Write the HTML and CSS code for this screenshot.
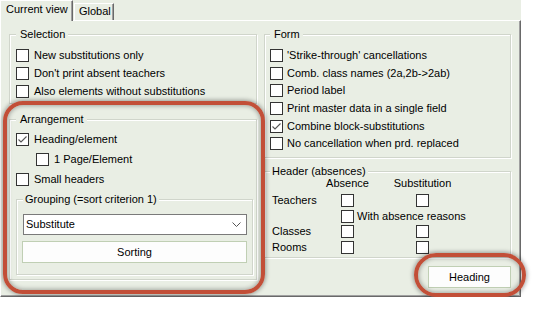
FILE: index.html
```html
<!DOCTYPE html>
<html>
<head>
<meta charset="utf-8">
<link rel="stylesheet" href="styles.css">
</head>
<body>
<div class="dialog">
  <div class="tabs">
    <div class="tab active">Current view</div>
    <div class="tab">Global</div>
  </div>
  <div class="panel">
    <div class="col col-left">
      <fieldset class="grp sel">
        <legend>Selection</legend>
        <div class="chk"><span class="box"></span>New substitutions only</div>
        <div class="chk"><span class="box"></span>Don't print absent teachers</div>
        <div class="chk"><span class="box"></span>Also elements without substitutions</div>
      </fieldset>
      <fieldset class="grp arr">
        <legend>Arrangement</legend>
        <div class="chk tall"><span class="box"><svg viewBox="0 0 11 11" class="tick"><polyline points="1.5,5.5 4,8 9.5,2.5"/></svg></span>Heading/element</div>
        <div class="chk tall indent"><span class="box"></span>1 Page/Element</div>
        <div class="chk tall"><span class="box"></span>Small headers</div>
        <fieldset class="grp grpg">
          <legend>Grouping (=sort criterion 1)</legend>
          <div class="combo"><span>Substitute</span><svg class="chev" viewBox="0 0 9 5"><polyline points="0.5,0.5 4.5,4.5 8.5,0.5"/></svg></div>
          <div class="btn sort">Sorting</div>
        </fieldset>
      </fieldset>
    </div>
    <div class="col col-right">
      <fieldset class="grp form">
        <legend>Form</legend>
        <div class="chk f"><span class="box"></span>'Strike-through' cancellations</div>
        <div class="chk f"><span class="box"></span>Comb. class names (2a,2b-&gt;2ab)</div>
        <div class="chk f"><span class="box"></span>Period label</div>
        <div class="chk f"><span class="box"></span>Print master data in a single field</div>
        <div class="chk f"><span class="box"><svg viewBox="0 0 11 11" class="tick"><polyline points="1.5,5.5 4,8 9.5,2.5"/></svg></span>Combine block-substitutions</div>
        <div class="chk f"><span class="box"></span>No cancellation when prd. replaced</div>
      </fieldset>
      <fieldset class="grp hdr">
        <legend>Header (absences)</legend>
        <div class="hgrid">
          <div class="colhead r1 c2">Absence</div>
          <div class="colhead r1 c4">Substitution</div>
          <div class="lbl r2">Teachers</div>
          <div class="cell r2 c2"><span class="box"></span></div>
          <div class="cell r2 c4"><span class="box"></span></div>
          <div class="cell r3 reasons"><span class="box"></span>With absence reasons</div>
          <div class="lbl r4">Classes</div>
          <div class="cell r4 c2"><span class="box"></span></div>
          <div class="cell r4 c4"><span class="box"></span></div>
          <div class="lbl r5">Rooms</div>
          <div class="cell r5 c2"><span class="box"></span></div>
          <div class="cell r5 c4"><span class="box"></span></div>
        </div>
      </fieldset>
      <div class="btn heading">Heading</div>
    </div>
  </div>
  <div class="hl hl-arr"></div>
  <div class="hl hl-head"></div>
</div>
</body>
</html>
```

FILE: styles.css
```css
* { box-sizing: border-box; }
html, body { margin: 0; background: #fff; }
body {
  font-family: "Liberation Sans", Arial, sans-serif;
  font-size: 11px;
  line-height: 13px;
  color: #000;
}
.dialog {
  position: relative;
  width: 521px;
  height: 297px;
  background: #e9eee4;
}
.tabs {
  display: flex;
  align-items: flex-end;
  height: 20px;
  position: relative;
  z-index: 1;
}
.tab {
  height: 17px;
  width: 40px;
  margin-left: 1px;
  padding: 1px 0 0 4px;
  border-left: 1px solid #fff;
  border-top: 1px solid #fff;
  border-right: 1px solid #696969;
  box-shadow: inset -1px 0 0 #a0a0a0;
  white-space: nowrap;
}
.tab.active {
  width: 73px;
  height: 21px;
  margin-left: 0;
  margin-bottom: -1px;
  padding: 2px 0 0 5px;
  background: #e9eee4;
}
.panel {
  height: 277px;
  border-top: 1px solid #fff;
  border-left: 1px solid #fff;
  border-right: 1px solid #696969;
  border-bottom: 1px solid #696969;
  box-shadow: inset -1px -1px 0 #a0a0a0;
  display: flex;
  gap: 7px;
  padding: 7px 0 0 8px;
}
.col { display: flex; flex-direction: column; }
.col-left { width: 248px; }
.col-right { width: 247px; }
.grp {
  margin: 0;
  min-width: 0;
  border: 1px solid #d0d5cb;
  box-shadow: inset 1px 1px 0 #fff, 1px 1px 0 #fff;
}
legend {
  padding: 0 3px 0 4px;
  line-height: 13px;
  background: #e9eee4;
  white-space: nowrap;
}
.chk {
  display: flex;
  align-items: center;
  height: 17.7px;
  white-space: nowrap;
}
.chk.f { height: 17.6px; }
.chk.tall { height: 20px; }
.chk.indent { padding-left: 20px; }
.box {
  width: 13px;
  height: 13px;
  border: 1px solid #333;
  background: #fff;
  margin-right: 5px;
  flex: none;
  display: block;
}
.f .box { margin-right: 4px; }
.tick {
  display: block;
  width: 11px;
  height: 11px;
  fill: none;
  stroke: #555;
  stroke-width: 1.1;
}
.sel { padding: 6px 5px 3px 6px; }
.arr { margin-top: 9px; padding: 3px 3px 4px 6px; }
.grpg { margin-top: 4px; padding: 8px 5px 11px 6px; }
.grpg legend { padding: 0 2px; }
.combo {
  width: 224px;
  height: 21px;
  border: 1px solid #7a7a7a;
  background: #fff;
  display: flex;
  align-items: center;
  justify-content: space-between;
  padding: 0 5px 0 2px;
}
.chev {
  width: 9px;
  height: 5px;
  fill: none;
  stroke: #555;
  stroke-width: 1;
}
.btn {
  height: 22px;
  border: 1px solid #c0cfb4;
  background: #fdfdfd;
  display: flex;
  align-items: center;
  justify-content: center;
}
.sort { width: 225px; margin-left: -1px; margin-top: 6px; }
.form { padding: 6px 5px 4px 5px; }
.hdr { margin-top: 7px; padding: 0 5px 2px 7px; }
.hdr legend { margin-left: -2px; padding: 0 2px; }
.hgrid {
  display: grid;
  grid-template-columns: 69px 13px 62px 13px 1fr;
  grid-template-rows: 15.2px repeat(4, 15.6px);
  align-items: center;
}
.colhead {
  align-self: start;
  justify-self: center;
  white-space: nowrap;
  margin-top: -1px;
}
.r1 { grid-row: 1; }
.r2 { grid-row: 2; }
.r3 { grid-row: 3; }
.r4 { grid-row: 4; }
.r5 { grid-row: 5; }
.c2 { grid-column: 2; }
.c4 { grid-column: 4; }
.lbl { grid-column: 1; }
.cell { display: flex; align-items: center; }
.cell .box { margin-right: 0; }
.reasons { grid-column: 2 / -1; white-space: nowrap; }
.reasons .box { margin-right: 3px; }
.heading { width: 83px; align-self: flex-end; margin-top: 8px; }
.hl {
  position: absolute;
  border: 4px solid #c24f38;
  box-shadow: 0 0 4px 1px rgba(0,0,0,.35), inset 0 0 4px 1px rgba(0,0,0,.3);
  pointer-events: none;
}
.hl-arr { left: 3px; top: 101px; width: 262px; height: 193px; border-radius: 20px; }
.hl-head { left: 414px; top: 253px; width: 112px; height: 44px; border-radius: 22px; }
```
